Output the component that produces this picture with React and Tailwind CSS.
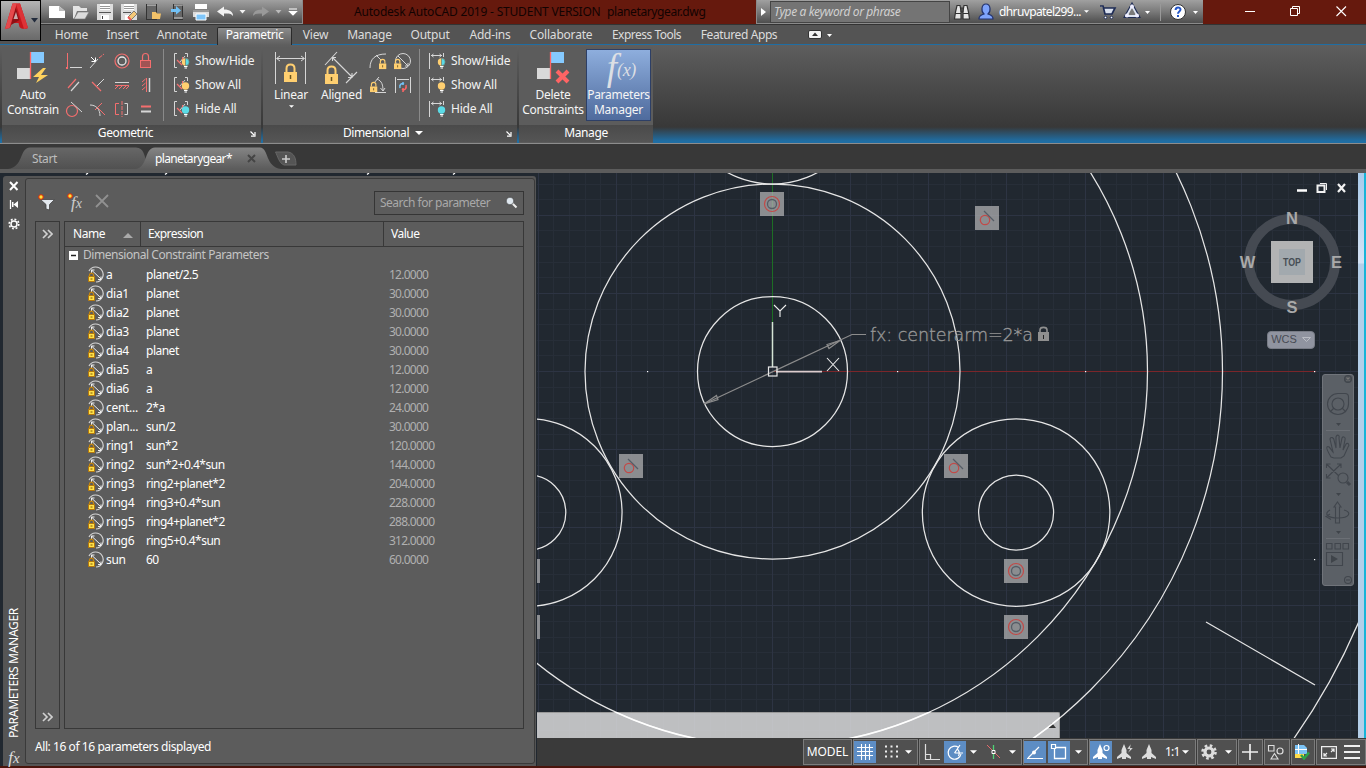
import React from "react";

const Ico = ({ w = 18, h = 18, vb, className = "", children }) => (
  <svg width={w} height={h} viewBox={vb || `0 0 ${w} ${h}`} fill="none" className={`shrink-0 ${className}`}>
    {children}
  </svg>
);

const Caret = ({ className = "text-white", w = 7, h = 4 }) => (
  <Ico w={w} h={h} vb="0 0 8 4" className={className}>
    <path d="M0 0H8L4 4Z" fill="currentColor" />
  </Ico>
);

const RED = "#f46e6e";
const LG = "#d6d6d6";
const YEL = "#ffcf70";

/* ---------- title bar ---------- */

function QuickAccess() {
  return (
    <div className="flex h-full w-[262px] items-center border-r border-b border-[#8a8a8a] bg-linear-to-b from-[#a0a0a0] via-[#7a7a7a] to-[#4e4e4e]">
      <Ico w={261} h={22} vb="42 1 261 22">
        <path d="M50 6H60L66 11V18H50Z" fill="#fff" />
        <path d="M60 6V11H66Z" fill="#bbb" />
        <path d="M74 18V6H80L82 8H88V11H78L75 19Z" fill="#e4e4e4" />
        <path d="M79 12H90L86 19H75Z" fill="#dcdcdc" stroke="#777" strokeWidth=".6" />
        <path d="M98 4H114V20H98Z" fill="#ddd" />
        <path d="M101 4H111V10H101Z" fill="#fff" />
        <path d="M101 6.5H111M101 8.5H111" stroke="#999" />
        <path d="M100 12.500H112" stroke="#555" />
        <path d="M102 15H110V20H102Z" fill="#fff" />
        <path d="M103.500 16V19" stroke="#444" />
        <path d="M122 4H138V20H122Z" fill="#ddd" />
        <path d="M125 4H135V10H125Z" fill="#fff" />
        <path d="M125 6.500H135M125 8.500H135" stroke="#999" />
        <path d="M124 12.500H132" stroke="#555" />
        <path d="M126 15H130V20H126Z" fill="#fff" />
        <path d="M129 17L135 11L138 14L132 20Z" fill="#f5c877" stroke="#555" strokeWidth=".7" />
        <path d="M129 17L132 20" stroke="#e55" strokeWidth="2" />
        <rect x="147.500" y="4.500" width="10" height="15" fill="#666" stroke="#333" />
        <path d="M148 5H157" stroke="#ddd" />
        <path d="M153 19V12H157L158 13.500H162L161 19Z" fill="#f3c269" />
        <rect x="174.500" y="4.500" width="9" height="15" fill="#666" stroke="#333" />
        <path d="M175 5H184M175 18H184" stroke="#ccc" />
        <path d="M172 9H177V6L182 10.500L177 14.500V12H172Z" fill="#72c2f7" />
        <path d="M196 4H208V9H196Z" fill="#fff" />
        <path d="M194 10H210V17H194Z" fill="#ddd" />
        <path d="M194 11H210" stroke="#555" />
        <path d="M197 14H207V20H197Z" fill="#7fc6fa" stroke="#fff" />
        <path d="M218 11.500L225 6.500V9.500C231 9.500 234 12 234 16C232 13.500 230 13.500 225 13.500V16.500Z" fill="#f2f2f2" />
        <path d="M240.500 10H246.500L243.500 13.500Z" fill="#f2f2f2" />
        <path d="M270 11.500L263 6.500V9.500C257 9.500 254 12 254 16C256 13.500 258 13.500 263 13.500V16.500Z" fill="#999" />
        <path d="M276.500 10H282.500L279.500 13.500Z" fill="#bbb" />
        <path d="M290 9H298M290.500 11.500H297.500L294 15Z" fill="#fff" stroke="#fff" strokeWidth="1.100" />
      </Ico>
    </div>
  );
}

function InfoCenter() {
  return (
    <div className="flex h-full w-[447px] items-center border-b border-l border-[#8a8a8a] bg-linear-to-b from-[#a0a0a0] via-[#7a7a7a] to-[#4e4e4e]">
      <div className="flex w-[13px] justify-center">
        <Ico w={5} h={8}><path d="M0 0L5 4L0 8Z" fill="#fff" /></Ico>
      </div>
      <div className="flex h-[22px] w-[180px] items-center border border-[#444] bg-[#747474] pl-[3px] text-[12px] tracking-[-0.38px] text-[#d0d0d0] italic">
        Type a keyword or phrase
      </div>
      <Ico w={49} h={22} vb="950 1 49 22">
        <path d="M955.500 12L957 5.500H960L961 11V19H954.500ZM963 11L964 5.500H967L968.500 12L969.500 19H963Z" fill="#e6e6e6" stroke="#333" strokeWidth="1.200" />
        <path d="M961 8H963V12H961ZM955 13.500H961M963 13.500H969" stroke="#333" />
        <path d="M979 19C979 15 982 15 984 14C981 12 981 4 986 4C991 4 991 12 988 14C990 15 993 15 993 19Z" fill="#7ea3fb" stroke="#23336e" strokeWidth="1.200" />
      </Ico>
      <div className="w-[85px] text-[12px] tracking-[-0.62px] whitespace-nowrap text-white">dhruvpatel299...</div>
      <Caret w={5} h={3} />
      <Ico w={112} h={22} vb="1089 1 112 22">
        <path d="M1100 6H1103L1105 14H1112L1115 8H1104" fill="#d9e0ee" stroke="#1f2c55" strokeWidth="1.700" />
        <circle cx="1105.500" cy="17.500" r="1.300" fill="#fff" stroke="#1f2c55" />
        <circle cx="1111.500" cy="17.500" r="1.300" fill="#fff" stroke="#1f2c55" />
        <path d="M1132 6L1126.500 16H1137.500Z" stroke="#1f2c55" strokeWidth="4" />
        <path d="M1132 6L1126.500 16H1137.500Z" fill="#7a7a7a" stroke="#dfe5f2" strokeWidth="1.800" />
        <g fill="#eef"><circle cx="1132" cy="6.500" r="2" /><circle cx="1127" cy="15.500" r="2" /><circle cx="1137" cy="15.500" r="2" /></g>
        <path d="M1145 11H1150L1147.500 14Z" fill="#fff" />
        <path d="M1160.500 4V21" stroke="#999" />
        <circle cx="1178" cy="12" r="7.500" fill="#fff" stroke="#333" />
        <path d="M1175.600 10C1175.600 6.800 1180.500 6.800 1180.500 9.600C1180.500 11.500 1178 11.500 1178 13.700M1178 15V17" stroke="#2456c8" strokeWidth="2" />
        <path d="M1193 11H1198L1195.500 14Z" fill="#fff" />
      </Ico>
    </div>
  );
}

function TitleBar() {
  return (
    <div className="flex h-[24px] bg-[#66190d]">
      <div className="w-[41px]" />
      <QuickAccess />
      <div className="flex w-[453px] items-center pl-[51px] text-[12px] tracking-[-0.2px] text-[#120302]">
        <span className="w-[253px] whitespace-pre">Autodesk AutoCAD 2019 - STUDENT VERSION</span>
        <span className="tracking-[-0.38px]">planetarygear.dwg</span>
      </div>
      <InfoCenter />
      <Ico w={163} h={23} vb="1203 0 163 23">
        <path d="M1245 11.500H1255" stroke="#fff" />
        <path d="M1290.500 8.500H1297.500V15.500H1290.500ZM1292.500 8V6.500H1299.500V13.500H1298" stroke="#fff" />
        <path d="M1336.500 6.500L1346 16M1346 6.500L1336.500 16" stroke="#fff" strokeWidth="1.100" />
      </Ico>
    </div>
  );
}

function AppButton() {
  return (
    <div className="absolute top-0 left-0 h-[41px] w-[41px] border border-black bg-linear-to-b from-[#b5b5b5] via-[#8a8a8a] to-[#6a6a6a]">
      <Ico w={39} h={39} vb="1 1 39 39">
        <path d="M12.500 3.500H20L28 28C25 29.500 21 29 19.500 27L18.500 23H12L10 28L5 29Z" fill="#c4161c" />
        <path d="M15.500 7L19.500 20L11 25Z" fill="#8d1015" />
        <path d="M12.500 3.500L17 3L9.500 28L5 29Z" fill="#e5494c" />
        <path d="M16 12L18 19H13.500Z" fill="#c9a9a9" />
        <path d="M20 3.500L28 28L24 29L16 4Z" fill="#dd3337" />
        <path d="M31 18H38L34.500 22.500Z" fill="#222b3c" />
      </Ico>
    </div>
  );
}

/* ---------- ribbon ---------- */

const TABS = [
  ["Home", "w-[53px]"], ["Insert", "w-[49px]"], ["Annotate", "w-[70px]"], ["Parametric", "w-[75px]"], ["View", "w-[47px]"],
  ["Manage", "w-[61px]"], ["Output", "w-[60px]"], ["Add-ins", "w-[60px]"], ["Collaborate", "w-[82px]"],
  ["Express Tools", "w-[89px] tracking-[-0.5px]"], ["Featured Apps", "w-[96px] tracking-[-0.4px]"],
];

function RibbonTabs() {
  return (
    <div className="flex h-[21px] items-end border-t border-b border-t-[#333] border-b-[#1f6ea4] bg-[#545454] pl-[45px] text-[12px] tracking-[-0.2px] text-[#dcdcdc]">
      {TABS.map(([t, w]) =>
        t === "Parametric" ? (
          <div key={t} className={`${w} -mb-px flex h-[18px] items-center justify-center rounded-t-[2px] border border-b-0 border-[#2a2a2a] bg-linear-to-b from-[#8c8c8c] to-[#5e5e5e] pb-[3px] tracking-[-0.4px] text-white`}>
            {t}
          </div>
        ) : (
          <div key={t} className={`${w} flex h-[18px] items-center justify-center whitespace-nowrap`}>{t}</div>
        )
      )}
      <Ico w={26} h={18} vb="808 26 26 18" className="ml-[21px]">
        <rect x="808.500" y="30.500" width="13" height="8" rx="1.500" fill="#f2f2f2" stroke="#333" />
        <path d="M812 36H818L815 32.500Z" fill="#333" />
        <path d="M827 34H832L829.500 37Z" fill="#fff" />
      </Ico>
    </div>
  );
}

const GEO = [
  <><path d="M5.500 4V15" stroke={RED} /><rect x="4" y="18" width="2" height="2" fill={RED} /><path d="M5.500 15V18" stroke={RED} /><path d="M8 18.500H20" stroke={LG} /></>,
  <><path d="M4 19L12 10" stroke={LG} /><path d="M13 9L18 5" stroke={RED} strokeDasharray="4 1" /><path d="M5 8L9 12M9.500 8.500V12.500H5.500" stroke="#fff" /></>,
  <><circle cx="12" cy="12" r="7" stroke={RED} strokeWidth="1.200" /><circle cx="12" cy="12" r="4" stroke="#e8e8e8" strokeWidth="1.300" /></>,
  <><rect x="6.500" y="11.500" width="10" height="7" stroke={RED} fill="#a05454" /><path d="M8.500 11V7.500C8.500 3.500 14.500 3.500 14.500 7.500V11" stroke={RED} strokeWidth="1.200" /></>,
  <><path d="M6 15L14 6" stroke={RED} strokeWidth="1.200" /><path d="M9 18L17 9" stroke={LG} strokeWidth="1.200" /></>,
  <><path d="M6 9L15 18" stroke={RED} strokeWidth="1.200" /><path d="M11 13L18 6" stroke={LG} /></>,
  <><path d="M5 9.500H19" stroke={LG} /><path d="M5 12.500H19M8 13L5 16M12 13L9 16M16 13L13 16M19 13L16 16" stroke={RED} /></>,
  <><path d="M12.500 5V19M11.500 6L8 9M11.500 10L8 13M11.500 14L8 17" stroke={RED} /><path d="M15.500 5V19" stroke={LG} strokeWidth="1.500" /></>,
  <><circle cx="10" cy="14" r="5.500" stroke={RED} strokeWidth="1.200" /><path d="M9 5L20 15" stroke={LG} /></>,
  <><path d="M4 8C10 8 14 12 14 19" stroke={LG} /><path d="M9 13L16 6" stroke={RED} /><path d="M12 11L19 18" stroke={RED} /></>,
  <><path d="M9 6.500H5.500V17.500H9" stroke={RED} /><path d="M12 4V20" stroke={RED} strokeDasharray="4 1" /><path d="M14.500 6.500H17.500V17.500H14.500" stroke={LG} /></>,
  <><path d="M7 9.500H17" stroke={RED} strokeWidth="2" /><path d="M7 14.500H17" stroke={LG} strokeWidth="2" /></>,
];

const Bulb = ({ mode }) => (
  <>
    <circle cx="12.500" cy="11" r="3.700" fill={mode === "hide" ? "#5bdbe6" : YEL} />
    {mode === "both" && <path d="M12.500 7.300A3.700 3.700 0 0 1 12.500 14.700Z" fill="#5bdbe6" stroke="#555" strokeWidth=".5" />}
    <path d="M11 15.500H14.500M11.500 17H14" stroke="#fff" strokeWidth="1.200" />
  </>
);

const ShowRows = ({ kind }) => (
  <div className="flex flex-col">
    {[["Show/Hide", "both"], ["Show All", "show"], ["Hide All", "hide"]].map(([t, m]) => (
      <div key={t} className="flex h-[24px] items-center text-[12px] tracking-[-0.2px] text-[#f2f2f2]">
        <Ico w={18} h={20} className="mr-[4px]">
          {kind === "geo" ? (
            <>
              <path d="M4 2.500H1.500V16.500H4M12 2.500H14.500V6" stroke={LG} />
              <path d="M4 9L9 14" stroke={RED} strokeWidth="1.200" />
              <path d="M7 11L12 5" stroke={LG} />
              <path d="M9.500 6V11" stroke={RED} />
            </>
          ) : (
            <path d="M.5 2V18M14.500 2V6M2 4.500H13M4.500 3L2.500 4.500L4.500 6M10.500 3L12.500 4.500L10.500 6" stroke={LG} />
          )}
          <Bulb mode={m} />
        </Ico>
        {t}
      </div>
    ))}
  </div>
);

const LockShape = ({ x, y, s = 1 }) => (
  <g transform={`translate(${x} ${y}) scale(${s})`}>
    <path d="M0 8H13V18H0Z" fill={YEL} />
    <path d="M2.500 8V4.500C2.500-.7 10.500-.7 10.500 4.500V8" stroke={YEL} strokeWidth="2" />
    <path d="M6.500 11V15" stroke="#6b5520" strokeWidth="1.500" />
  </g>
);

const PanelShell = ({ w, title, arrow, caret, titlePad = "", children }) => (
  <div className={`${w} mr-[2px] flex flex-col bg-[#5c5c5c]`}>
    <div className="flex h-[78px] pt-[2px]">{children}</div>
    <div className={`${titlePad} relative flex h-[17px] items-center justify-center gap-1.5 bg-linear-to-b from-[#4a4a4a] to-[#555] pb-[2px] text-[12px] tracking-[-0.4px] text-white`}>
      <span>{title}</span>
      {caret && <Caret w={8} h={4} />}
      {arrow && (
        <Ico w={6} h={6} className="absolute top-[6px] right-[5px]">
          <path d="M.5 .5L4 4M5 1V5.200H1" stroke="#fff" strokeWidth="1.200" />
        </Ico>
      )}
    </div>
  </div>
);

const BigButton = ({ w, icon, lines, drop, className = "" }) => (
  <div className={`${w} ${className} flex h-[72px] flex-col items-center text-center text-[12px] leading-[15px] tracking-[-0.25px] text-[#f5f5f5]`}>
    <div className="h-[38px]">{icon}</div>
    {lines.map((l) => <div key={l} className="whitespace-nowrap">{l}</div>)}
    {drop && <Caret w={5} h={3} className="mt-[3px] text-white" />}
  </div>
);

const Flags = ({ children }) => (
  <Ico w={36} h={36} vb="15 49 36 36">
    <path d="M17 68H30V79H17Z" fill="#d9d9d9" />
    <path d="M31 52H44V63H31Z" fill="#85caff" />
    <path d="M30.500 52V79" stroke="#ff6464" strokeWidth="1.300" />
    {children}
  </Ico>
);

function Ribbon() {
  return (
    <div className="flex h-[99px] border-b border-[#8d8d8d] bg-[linear-gradient(#5e5e5e_0px,#383838_82px,#1f6ea4_96px)] px-[2px] pt-[2px]">
      <PanelShell w="w-[259px]" title="Geometric" arrow titlePad="pr-[12px]">
        <BigButton w="w-[60px]" className="pl-[2px]" lines={["Auto", "Constrain"]} icon={
          <Flags><path d="M43 68L33 77H39L36 83L48 75H41L46 68Z" fill="#ffd25e" /></Flags>
        } />
        <div className="grid h-[72px] w-[96px] grid-cols-4">
          {GEO.map((g, i) => <Ico key={i} w={24} h={24}>{g}</Ico>)}
        </div>
        <div className="mr-[2px] ml-[5px] h-[72px] w-px bg-[#8a8a8a]" />
        <div className="pl-[7px]"><ShowRows kind="geo" /></div>
      </PanelShell>
      <PanelShell w="w-[254px]" title="Dimensional" arrow caret titlePad="pr-[14px]">
        <BigButton w="w-[56px]" lines={["Linear"]} drop icon={
          <Ico w={34} h={38} vb="274 49 34 38">
            <path d="M275.500 52V84M305.500 52V84M277 58.500H304M280 56L276.500 58.500L280 61M301 56L304.500 58.500L301 61" stroke={LG} />
            <LockShape x={284} y={64} />
          </Ico>
        } />
        <BigButton w="w-[45px]" lines={["Aligned"]} icon={
          <Ico w={38} h={38} vb="323 49 38 38">
            <path d="M325 65L337 52M346 83L357 72M332 57L352 77M332.500 61V57.500H336M348 77.500H352V73" stroke={LG} strokeWidth="1.100" />
            <LockShape x={325} y={66} />
          </Ico>
        } />
        <div className="ml-[3px] flex h-[72px] w-[52px] flex-wrap content-start">
          <Ico w={24} h={24}>
            <path d="M3 19C3 10 8 5 19 5M9 6L14 11" stroke={LG} /><LockShape x={12} y={10} s={0.56} />
          </Ico>
          <Ico w={24} h={24}>
            <circle cx="12" cy="12" r="7.500" stroke={LG} /><path d="M7 7L17 17M14 17H17V14" stroke={LG} /><LockShape x={3} y={10} s={0.56} />
          </Ico>
          <Ico w={24} h={24}>
            <path d="M8 19.500H19M7 10L12 4M10 6C15 8 16 12 16 18M13.500 15L16 18L18 15" stroke={LG} /><LockShape x={3} y={9} s={0.56} />
          </Ico>
          <Ico w={24} h={24}>
            <path d="M4.500 4V20M19.500 4V20M6 6.500H18" stroke={LG} />
            <path d="M9 15C8 11 11 10 13 11M12 9V12" stroke="#72c2f7" strokeWidth="1.500" />
            <path d="M15 12C16 16 13 18 11 16M12 19V15" stroke="#f66" strokeWidth="1.500" />
          </Ico>
        </div>
        <div className="h-[72px] w-px bg-[#8a8a8a]" />
        <div className="pl-[9px]"><ShowRows kind="dim" /></div>
      </PanelShell>
      <PanelShell w="w-[134px]" title="Manage">
        <BigButton w="w-[68px]" lines={["Delete", "Constraints"]} icon={
          <Flags><path d="M37 71L48 82M48 71L37 82" stroke="#ff6464" strokeWidth="4" /></Flags>
        } />
        <div className="-ml-px h-[72px] w-[65px] border border-[#2d3f66] bg-linear-to-b from-[#8eaedd] to-[#4f6b9d]">
          <BigButton w="w-[63px]" className="-mt-px" lines={["Parameters", "Manager"]} icon={
            <div className="flex items-start pt-[1px] pl-[6px] font-['Liberation_Serif',serif] text-[#dcdfe4] italic">
              <span className="text-[37px] leading-[36px]">f</span>
              <span className="pt-[10px] text-[18px] leading-[20px]">(x)</span>
            </div>
          } />
        </div>
      </PanelShell>
    </div>
  );
}

/* ---------- document tabs ---------- */

function DocTabs() {
  return (
    <div className="relative h-[29px] border-b-[4px] border-[#5c5c5c] bg-[#383838]">
      <Ico w={310} h={25} vb="0 144 310 25" className="absolute top-0 left-0">
        <defs>
          <linearGradient id="t1" x1="0" y1="0" x2="0" y2="1"><stop stopColor="#676767" /><stop offset="1" stopColor="#515151" /></linearGradient>
          <linearGradient id="t2" x1="0" y1="0" x2="0" y2="1"><stop stopColor="#858585" /><stop offset="1" stopColor="#5c5c5c" /></linearGradient>
        </defs>
        <path d="M8 169C24 167 19 148 30 147.500H136C144 148 144 155 147 163L149 169Z" fill="url(#t1)" />
        <path d="M136 169C148 167 144 148 155 147.500H260C269 148 265 167 281 169Z" fill="url(#t2)" />
        <path d="M275.500 152H288C294 153 296 158 296 165H284C279 163 278 157 275.500 152Z" fill="#555" stroke="#666" />
        <path d="M282 159H290M286 155V163" stroke="#ccc" strokeWidth="1.600" />
        <path d="M248 155L255 162M255 155L248 162" stroke="#454545" strokeWidth="2" />
      </Ico>
      <div className="relative flex h-full items-center pt-[5px] pl-[32px] text-[12px] tracking-[-0.5px]">
        <span className="w-[123px] tracking-[-0.4px] text-[#bdbdbd]">Start</span>
        <span className="tracking-[-0.65px] text-white">planetarygear*</span>
      </div>
    </div>
  );
}

/* ---------- parameters palette ---------- */

const PARAMS = [
  ["a", "planet/2.5", "12.0000"], ["dia1", "planet", "30.0000"], ["dia2", "planet", "30.0000"], ["dia3", "planet", "30.0000"],
  ["dia4", "planet", "30.0000"], ["dia5", "a", "12.0000"], ["dia6", "a", "12.0000"], ["cent...", "2*a", "24.0000"],
  ["plan...", "sun/2", "30.0000"], ["ring1", "sun*2", "120.0000"], ["ring2", "sun*2+0.4*sun", "144.0000"],
  ["ring3", "ring2+planet*2", "204.0000"], ["ring4", "ring3+0.4*sun", "228.0000"], ["ring5", "ring4+planet*2", "288.0000"],
  ["ring6", "ring5+0.4*sun", "312.0000"], ["sun", "60", "60.0000"],
];

const Chevrons = () => (
  <Ico w={11} h={10}><path d="M1 1L5 5L1 9M6 1L10 5L6 9" stroke="#d0d0d0" strokeWidth="1.700" /></Ico>
);

const ParamIcon = () => (
  <Ico w={17} h={17}>
    <path d="M2 5A7.500 7.500 0 1 1 9 16" stroke="#d5d5d5" strokeWidth="1.200" />
    <path d="M4.500 4L14 13M4.500 7V4H7.500M11 13.500H14V10.500" stroke="#f0f0f0" />
    <path d="M2.500 11V9C2.500 6.500 6.500 6.500 6.500 9V11" stroke="#c8860a" strokeWidth="1.200" />
    <path d="M1.500 10.500H7.500V15.500H1.500Z" fill="#ffe14a" stroke="#b5780c" />
    <path d="M3.500 13H5.500" stroke="#7a5200" />
  </Ico>
);

const Spark = () => (
  <>
    <path d="M3 0V6M0 3H6M1 1L5 5M5 1L1 5" stroke="#e0350c" strokeWidth="1.300" />
    <circle cx="3" cy="3" r="1.700" fill="#ffe23a" />
  </>
);

function Palette() {
  return (
    <div className="relative h-[593px] w-[537px] bg-[#212830] pt-[3px] pl-[3px]">
      <Ico w={537} h={3} vb="0 173 537 3" className="absolute top-0 left-0">
        <path d="M86 174.500L88 173M165 174.500L167 173M367 174.500L369 173M453 174.500L455 173" stroke="#fff" strokeWidth="1.300" />
      </Ico>
      <div className="flex h-[590px] w-[533px] rounded-t-[3px] bg-[#555] pt-[2px]">
        <div className="flex w-[22px] flex-col items-center">
          <Ico w={20} h={56} vb="4 178 20 56">
            <path d="M10 182L17.500 190M17.500 182L10 190" stroke="#fff" strokeWidth="2" />
            <path d="M10.500 200V209" stroke="#fff" strokeWidth="1.300" />
            <path d="M13.500 204.500L18 201V208ZM12 202H13.500V207H12Z" fill="#fff" />
            <circle cx="14" cy="224" r="3" stroke="#fff" strokeWidth="1.500" />
            <circle cx="14" cy="224" r="4.800" stroke="#fff" strokeWidth="1.600" strokeDasharray="1.900 1.850" />
          </Ico>
          <div className="mt-auto mb-[11px] rotate-180 text-[12px] leading-[16px] tracking-[-0.3px] whitespace-nowrap text-white [writing-mode:vertical-rl]">PARAMETERS MANAGER</div>
          <div className="-mb-[1px] font-['Liberation_Serif',serif] text-[17px] leading-[18px] text-[#ddd] italic">f<span className="text-[15px]">x</span></div>
        </div>
        <div className="flex h-[586px] w-[510px] flex-col rounded-[3px] border border-[#3a3a3a] bg-[#5c5c5c] pr-[10px] pl-[9px]">
          <div className="flex h-[42px] items-center pt-[5px]">
            <Ico w={20} h={18} className="ml-[3px]">
              <path d="M2.500 5.500H16.500L11.500 10.500V16L8 15V10.500Z" fill="#e4e9ef" stroke="#444" strokeWidth=".8" />
              <Spark />
            </Ico>
            <div className="relative ml-[9px] h-[20px] w-[18px] font-['Liberation_Serif',serif] text-[17px] leading-[20px] text-[#ccc] italic">
              <span className="pl-[4px]">f</span><span className="text-[14px]">x</span>
              <Ico w={8} h={8} className="absolute top-0 left-0"><Spark /></Ico>
            </div>
            <Ico w={14} h={14} className="-mt-[3px] ml-[10px]"><path d="M1 1L13 13M13 1L1 13" stroke="#919191" strokeWidth="1.800" /></Ico>
            <div className="ml-auto flex h-[24px] w-[150px] items-center justify-between border border-[#353535] pr-[5px] pl-[5px] text-[12px] tracking-[-0.5px] text-[#a9a9a9]">
              <span>Search for parameter</span>
              <Ico w={13} h={13}>
                <path d="M7 7L11.500 11.500" stroke="#eee" strokeWidth="2" />
                <circle cx="5" cy="5" r="3.800" fill="#dfe7ee" stroke="#333" strokeWidth=".6" />
              </Ico>
            </div>
          </div>
          <div className="flex h-[508px] justify-between">
            <div className="flex w-[25px] flex-col items-center justify-between border border-[#383838] pt-[7px] pr-[1px] pb-[6px]">
              <Chevrons /><Chevrons />
            </div>
            <div className="w-[460px] border border-[#383838] text-[12px] tracking-[-0.5px]">
              <div className="flex h-[25px] border-b border-[#383838] tracking-[-0.5px] text-white">
                <div className="flex w-[76px] items-center justify-between border-r border-[#383838] pr-[7px] pl-[8px]">
                  <span className="tracking-[-0.4px]">Name</span><Ico w={10} h={5} className="mt-[3px]"><path d="M0 5H10L5 0Z" fill="#aaa" /></Ico>
                </div>
                <div className="flex w-[243px] items-center border-r border-[#383838] pl-[7px] tracking-[-0.6px]">Expression</div>
                <div className="flex items-center pl-[7px]">Value</div>
              </div>
              <div className="flex h-[18px] items-center pb-[2px] pl-[4px] text-[#c4c4c4]">
                <Ico w={9} h={9} className="mr-[5px]"><path d="M0 0H9V9H0Z" fill="#fff" /><path d="M2 4.500H7" stroke="#222" strokeWidth="1.500" /></Ico>
                <span className="tracking-[-0.45px]">Dimensional Constraint Parameters</span>
              </div>
              {PARAMS.map(([n, e, v]) => (
                <div key={n} className="flex h-[19px] items-center pl-[22px] text-white">
                  <ParamIcon />
                  <span className="w-[39px] pl-[2px] tracking-[-0.3px] whitespace-nowrap">{n}</span>
                  <span className="ml-[3px] w-[243px]">{e}</span>
                  <span className="tracking-[-0.75px] text-[#b0b0b0]">{v}</span>
                </div>
              ))}
            </div>
          </div>
          <div className="flex flex-1 items-center pt-[1px] text-[12px] tracking-[-0.43px] text-white">All: 16 of 16 parameters displayed</div>
        </div>
      </div>
    </div>
  );
}

/* ---------- drawing area ---------- */

const CX = 772.5, CY = 371.5, STEP = 15.625;
const V = Array.from({ length: 55 }, (_, i) => i - 16);
const H = Array.from({ length: 38 }, (_, i) => i - 13);

const Badge = ({ x, y, tangent }) => (
  <g transform={`translate(${x} ${y})`}>
    <rect width="24" height="24" fill="#b4b4b6" fillOpacity=".72" />
    {tangent ? (
      <><circle cx="10" cy="14" r="4.700" stroke="#c24a48" strokeWidth="1.200" /><path d="M9 5L19 15" stroke="#555d66" strokeWidth="1.200" /></>
    ) : (
      <><circle cx="12" cy="12" r="7.500" stroke="#c24a48" strokeWidth="1.200" /><circle cx="12" cy="12" r="4.500" stroke="#555d66" strokeWidth="1.300" /></>
    )}
  </g>
);

function Drawing() {
  return (
    <Ico w={821} h={565} vb="537 173 821 565" className="block">
      <g stroke="#272e38">
        {V.map((i) => i % 5 !== 0 && <path key={i} d={`M${Math.floor(CX + i * STEP) + 0.5} 173V738`} />)}
        {H.map((i) => i % 5 !== 0 && <path key={i} d={`M537 ${Math.floor(CY + i * STEP) + 0.5}H1358`} />)}
      </g>
      <g stroke="#2d3443">
        {V.map((i) => i % 5 === 0 && <path key={i} d={`M${Math.floor(CX + i * STEP) + 0.5} 173V738`} />)}
        {H.map((i) => i % 5 === 0 && <path key={i} d={`M537 ${Math.floor(CY + i * STEP) + 0.5}H1358`} />)}
      </g>
      <path d="M772 371.500H1316" stroke="#7a262a" />
      <path d="M772.500 173V322" stroke="#1d6e24" />
      <g stroke="#e6e6e6" strokeWidth="1.250">
        <circle cx={CX} cy={CY} r="75" />
        <circle cx={CX} cy={CY} r="187.500" />
        <circle cx={CX} cy={CY} r="375" />
        <circle cx={CX} cy={CY} r="450" />
        <circle cx={CX} cy={CY} r="637.500" />
        <circle cx={CX} cy="90.250" r="93.750" />
        <circle cx="1016.100" cy="512.500" r="93.750" />
        <circle cx="1016.100" cy="512.500" r="37.500" />
        <circle cx="528.300" cy="512.500" r="93.750" />
        <circle cx="528.300" cy="512.500" r="37.500" />
        <path d="M1206 622L1315 685" />
      </g>
      <g fill="#fff">
        {[[647, 371], [897, 371], [1085, 371], [1314, 371], [1314, 559]].map(([x, y]) => <rect key={x + "-" + y} x={x} y={y} width="1.200" height="1.200" />)}
      </g>
      <path d="M704 404L852 334.500H866" stroke="#8c8c8c" strokeWidth="1.200" />
      <path d="M704 404L716.500 395.500L718 399.500ZM840 340.500L827 344.500L829 348.500Z" stroke="#8c8c8c" strokeWidth="1.200" />
      <path d="M772.500 322V367" stroke="#d5e4d5" strokeWidth="1.500" />
      <path d="M776 371.700H822" stroke="#dccccd" strokeWidth="1.700" />
      <rect x="768.500" y="367" width="8.500" height="9" stroke="#e8e8e8" strokeWidth="1.200" />
      <path d="M774 305L780 311L786 305M780 311V317M827 358L839 371M839 358L827 371" stroke="#f0f0f0" strokeWidth="1.100" />
      <text x="870" y="341" fill="#979797" stroke="#979797" strokeWidth=".35" textLength="163" className="font-['DejaVu_Sans',sans-serif] text-[17.5px] font-extralight">fx: centerarm=2*a</text>
      <path d="M1038 332H1049V341H1038Z" fill="#8f8f8f" />
      <path d="M1040 332V330C1040 326.500 1047 326.500 1047 330V332" stroke="#8f8f8f" strokeWidth="1.600" />
      <path d="M1043.500 335V339" stroke="#222" />
      <Badge x={760} y={192} />
      <Badge x={975} y={206} tangent />
      <Badge x={619} y={454} tangent />
      <Badge x={944} y={454} tangent />
      <Badge x={1004} y={559} />
      <Badge x={1004} y={615} />
      <Badge x={516} y={559} />
      <Badge x={516} y={615} />
    </Ico>
  );
}

function ViewCube() {
  return (
    <div className="absolute top-[5px] right-[12px] flex w-[108px] flex-col items-center">
      <Ico w={108} h={145} vb="1238 178 108 145">
        <path d="M1297 190.500H1307" stroke="#fff" strokeWidth="2.500" />
        <path d="M1317.500 185.500H1324.500V192H1317.500Z" stroke="#f2f2f2" strokeWidth="2" />
        <path d="M1320 183.500H1326.500V190" stroke="#f2f2f2" />
        <path d="M1338 184L1345 192M1345 184L1338 192" stroke="#f2f2f2" strokeWidth="2.200" />
        <circle cx="1292" cy="262" r="43" stroke="#454a52" strokeWidth="10" />
        <path d="M1271 241H1313V283H1271Z" fill="#b2b3b4" />
        <path d="M1279 249H1305V275H1279Z" fill="#a2a9ae" />
        <g textAnchor="middle" className="font-['Liberation_Sans',sans-serif] font-bold">
          <text x="1292" y="266" fill="#474e55" textLength="18" lengthAdjust="spacingAndGlyphs" className="text-[11px]">TOP</text>
          <g fill="#a9a9a9" className="text-[16.5px]">
            <text x="1292" y="224">N</text><text x="1292" y="313">S</text><text x="1247.500" y="268">W</text><text x="1336.500" y="268">E</text>
          </g>
        </g>
      </Ico>
      <div className="mt-[8px] mr-[2px] flex h-[18px] w-[48px] items-center justify-center gap-[5px] rounded-[4px] border border-[#787c86] bg-[#9094a0] pb-[2px] font-['Liberation_Sans',sans-serif] text-[11px] text-[#474b54]">
        WCS
        <Ico w={9} h={5}><path d="M.5 .5H8.500L4.500 4.500Z" stroke="#b9bcc4" /></Ico>
      </div>
    </div>
  );
}

function NavBar() {
  return (
    <div className="absolute top-[201px] right-[4px] h-[212px] w-[32px] rounded-[3px] border border-[#70747a] bg-[#5b6066]">
      <Ico w={30} h={210} vb="1323 375 30 210">
        <g stroke="#41464d" strokeWidth="1.100">
          <circle cx="1348" cy="379" r="3.500" fill="#4b5056" /><path d="M1346.500 377.500L1349.500 380.500M1349.500 377.500L1346.500 380.500" stroke="#777" />
          <path d="M1338 393.500H1345C1348 393.500 1348.500 395 1348.500 397V404A10.500 10.500 0 1 1 1338 393.500Z" />
          <circle cx="1338" cy="404" r="6" /><path d="M1334 408L1330 412M1342 408L1346 412" />
          <path d="M1331 457C1328 452 1326 448 1327 447C1329 445 1331 450 1333 452L1330 439C1331 436 1334 438 1334 440L1336 448L1336 437C1337 434 1340 435 1339 438L1340 448L1342 438C1343 436 1346 437 1345 440L1343 450L1346 444C1348 442 1350 445 1348 447L1344 456L1341 458H1334Z" />
          <path d="M1326.500 464L1341 478M1341 464L1326.500 478M1326.500 468V464H1330.500M1337 464H1341V468M1326.500 474V478H1330.500" />
          <circle cx="1343" cy="478" r="5" fill="#5b6066" /><path d="M1347 482L1350 485" strokeWidth="3" />
          <path d="M1337.500 502L1341 507H1339.500V523H1335.500V507H1334Z" />
          <path d="M1330 510C1323 514 1328 518 1338 518C1350 518 1352 512 1344 510M1330 514L1326 516.500L1331 519.500" />
          <path d="M1326.500 543.500H1332V549H1326.500ZM1335 543.500H1340.500V549H1335ZM1343 543.500H1348.500V549H1343ZM1326.500 552.500H1342.500V565.500H1326.500Z" />
          <circle cx="1348" cy="580" r="3.500" /><path d="M1346 580H1350" />
        </g>
        <g fill="#3f444a"><path d="M1336 423H1341L1338.500 426ZM1336 493H1341L1338.500 496ZM1336 531H1341L1338.500 534ZM1331 555V563L1338 559Z" /></g>
        <path d="M1326 430.500H1350M1326 538.500H1350" stroke="#6b6f75" />
      </Ico>
    </div>
  );
}

function Canvas() {
  return (
    <div className="relative h-[565px] w-[821px] overflow-hidden bg-[#212830]">
      <Drawing />
      <ViewCube />
      <NavBar />
      <div className="absolute bottom-0 left-0 h-[26px] w-[523px] rounded-tr-[2px] border-t border-r border-[#999] bg-[#e0e0e2]/82">
        <Ico w={8} h={5} className="absolute top-[10px] right-[3px]"><path d="M0 5H8L4 0Z" fill="#333" /></Ico>
      </div>
      <Ico w={523} h={26} vb="537 712 523 26" className="absolute bottom-0 left-0">
        <circle cx={CX} cy={CY} r="375" stroke="#fff" strokeWidth="1.600" /><circle cx={CX} cy={CY} r="450" stroke="#fff" strokeWidth="1.600" />
      </Ico>
    </div>
  );
}

/* ---------- status bar ---------- */

const Group = ({ w, children }) => (
  <div className={`${w} flex h-[26px] items-center border border-[#7c7c7c] bg-[#505050]`}>{children}</div>
);
const On = ({ children }) => <div className="flex h-[22px] w-[22px] items-center justify-center bg-[#5d8dc4]">{children}</div>;
const Cell = ({ w, children }) => <div className={`${w} flex justify-center`}>{children}</div>;
const Person = "M8 0L10.500 6V9L15 13V15L10 13V15H6V13L1 15V13L5.500 9V6Z";

function StatusBar() {
  return (
    <div className="flex h-[28px] items-center gap-px bg-[#3a3a3a] pl-[266px] text-white">
      <Group w="w-[49px]"><div className="w-full text-center text-[12px] tracking-[-0.1px]">MODEL</div></Group>
      <Group w="w-[65px]">
        <On><Ico w={16} h={16}><path d="M4.500 0V16M8.500 0V16M12.500 0V16M0 3.500H16M0 7.500H16M0 11.500H16" stroke="#fff" strokeWidth="1.100" /></Ico></On>
        <Cell w="w-[29px]"><Ico w={14} h={14}><path d="M1 1.500H14M1 6.500H14M1 11.500H14" stroke="#eee" strokeWidth="2" strokeDasharray="2 3.500" /></Ico></Cell>
        <Caret />
      </Group>
      <Group w="w-[103px]">
        <Cell w="w-[25px]"><Ico w={16} h={18}><path d="M1.500 1V16.500H16M1.500 11.500H6.500V16" stroke="#ddd" strokeWidth="1.200" /></Ico></Cell>
        <On><Ico w={18} h={18}><path d="M12.500 4.500A6.500 6.500 0 1 0 15 11" stroke="#fff" strokeWidth="1.200" /><path d="M8.500 10L14 2M8.500 10H17M11 6C13 7 14 10 12.500 13" stroke="#fff" strokeWidth="1.200" /></Ico></On>
        <Cell w="w-[17px]"><Caret /></Cell>
        <Cell w="w-[22px]"><Ico w={16} h={16}><path d="M8.500 1V15" stroke="#51d276" strokeWidth="1.300" /><path d="M2 1L15 14" stroke="#e46a6a" /><path d="M7 6.500H10V9.500H7Z" stroke="#fff" fill="#505050" /></Ico></Cell>
        <Cell w="w-[18px]"><Caret /></Cell>
      </Group>
      <Group w="w-[65px]">
        <On><Ico w={18} h={16}><path d="M1 14.500H17M2 14L13 3" stroke="#fff" strokeWidth="1.200" /><circle cx="8" cy="8.500" r="2" fill="#fff" /></Ico></On>
        <div className="ml-[2px]"><On><Ico w={18} h={18}><path d="M4 4.500H15.500V15.500H4.500V5" stroke="#fff" strokeWidth="1.300" /><path d="M1.500 1.500H5.500V5.500H1.500Z" fill="#5d8dc4" stroke="#fff" strokeWidth="1.200" /></Ico></On></div>
        <Cell w="w-[17px]"><Caret /></Cell>
      </Group>
      <Group w="w-[107px]">
        <On><Ico w={18} h={16}><path d={Person} fill="#fff" /><circle cx="14.500" cy="4" r="2.500" fill="#5d8dc4" stroke="#fff" strokeWidth="1.200" /></Ico></On>
        <Cell w="w-[25px]"><Ico w={18} h={16}><path d={Person} fill="#ddd" /><path d="M15 0L11 5H14L12 9L17 4H14Z" fill="#eee" stroke="#505050" strokeWidth=".4" /></Ico></Cell>
        <Cell w="w-[24px]"><Ico w={16} h={16}><path d={Person} fill="#ddd" /></Ico></Cell>
        <span className="w-[21px] pl-[4px] text-[12px] tracking-[-0.8px]">1:1</span>
        <Caret />
      </Group>
      <Group w="w-[40px]">
        <Cell w="w-[22px]">
          <Ico w={16} h={16}><circle cx="8" cy="8" r="4" stroke="#ddd" strokeWidth="3.200" /><circle cx="8" cy="8" r="6.500" stroke="#ddd" strokeWidth="2.600" strokeDasharray="2.600 2.500" /></Ico>
        </Cell>
        <Cell w="w-[16px]"><Caret /></Cell>
      </Group>
      <Group w="w-[25px]"><Cell w="w-[21px]"><Ico w={16} h={16}><path d="M8 0V16M0 8H16" stroke="#eee" strokeWidth="1.700" /></Ico></Cell></Group>
      <Group w="w-[26px]"><Cell w="w-[21px]"><Ico w={17} h={16}><path d="M1.500 1.500H7V7H1.500ZM7.500 9.500L11 15H4Z" stroke="#ddd" strokeWidth="1.100" /><circle cx="13" cy="7" r="3" stroke="#ddd" strokeWidth="1.200" /></Ico></Cell></Group>
      <Group w="w-[24px]">
        <Cell w="w-[20px]">
          <Ico w={16} h={16}><path d="M1 1H10L13 4V10H1Z" fill="#7cc3f5" /><path d="M1 10H10V14H1Z" fill="#ffdc4a" /><path d="M4.500 0V10M1 5.500H13" stroke="#fff" /><path d="M7 11L10 14.500L15 8.500" stroke="#2da44a" strokeWidth="2.500" /></Ico>
        </Cell>
      </Group>
      <Group w="w-[50px]">
        <Cell w="w-[23px]"><Ico w={16} h={13}><path d="M.6 .6H15.400V12.400H.6ZM3 10L6 7M3 7V10H6M13 3L10 6M10 3H13V6" stroke="#eee" strokeWidth="1.200" /></Ico></Cell>
        <Cell w="w-[23px]"><Ico w={16} h={14}><path d="M0 1H16M0 7H16M0 13H16" stroke="#eee" strokeWidth="2" /></Ico></Cell>
      </Group>
    </div>
  );
}

export default function App() {
  return (
    <div className="relative flex h-[768px] w-[1366px] flex-col overflow-hidden bg-[#4a140c] font-['Noto_Sans',sans-serif] leading-[16px]">
      <TitleBar />
      <RibbonTabs />
      <Ribbon />
      <DocTabs />
      <div className="flex h-[593px]">
        <Palette />
        <div className="flex w-[829px] flex-col">
          <div className="flex h-[565px]">
            <Canvas />
            <div className="h-full w-[8px] border-r-2 border-[#18b4d8] bg-[linear-gradient(#a9cbeb_0,#d5e3f5_90px,#b4cfe9_91px)]" />
          </div>
          <StatusBar />
        </div>
      </div>
      <AppButton />
    </div>
  );
}
